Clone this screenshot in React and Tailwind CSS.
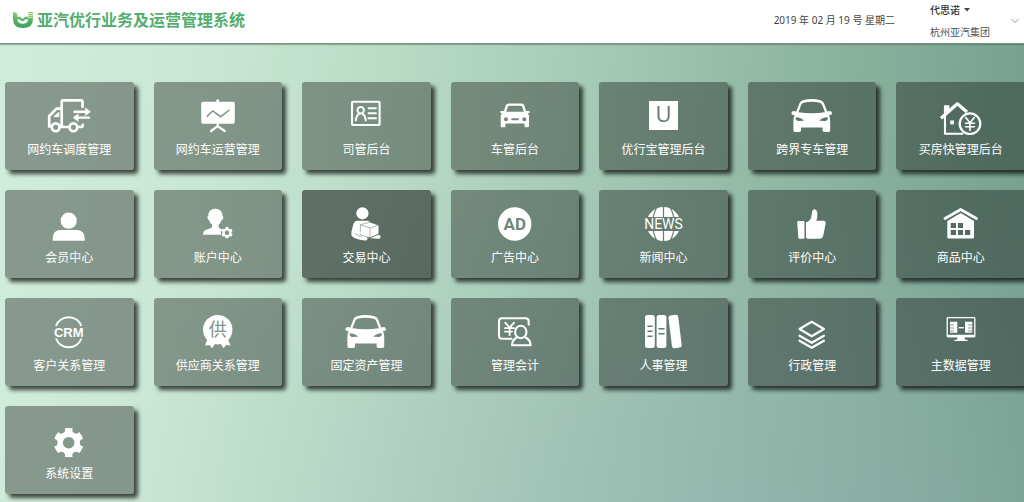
import React from 'react';

function Gear({ id, cx, cy, r, notch, hole }) {
  const angles = [0, 60, 120, 180, 240, 300];
  return (
    <>
      <mask id={id}>
        <circle cx={cx} cy={cy} r={r} fill="white" />
        <circle cx={cx} cy={cy} r={hole} fill="black" />
        {angles.map((a) => (
          <circle key={a} cx={cx + r} cy={cy} r={notch} fill="black" transform={`rotate(${a} ${cx} ${cy})`} />
        ))}
      </mask>
      <rect x={cx - r} y={cy - r} width={r * 2} height={r * 2} fill="currentColor" mask={`url(#${id})`} />
    </>
  );
}

const line = { fill: 'none', stroke: 'currentColor', strokeLinecap: 'round', strokeLinejoin: 'round' };

const truck = (
  <g {...line} strokeWidth="2.7">
    <path d="M16.7 32.5V7.5q0-1.2 1.2-1.2h18.4q1.2 0 1.2 1.2v5.2" />
    <path d="M16.7 14.6h-5.2L4.2 22v10.5h1.4M16.7 33h6.5M33.6 33h2.6q1.6 0 1.6-2.2" />
    <path d="M13.5 18.5l-4.7 4.2h4.7z" fill="currentColor" strokeWidth="1" />
    <circle cx="10.7" cy="33.2" r="3.9" />
    <circle cx="28.4" cy="33.2" r="3.9" />
    <path d="M29.5 17.7H42M44 23.6H31" strokeWidth="2.4" />
    <path d="M40.5 14l5 3.7-5 3.7zM33 20l-5 3.6 5 3.7z" fill="currentColor" strokeWidth=".5" />
  </g>
);

const board = (
  <g>
    <path d="M9 7.7h13.3V6.4q0-1.2 1.4-1.2t1.4 1.2v1.3H39q1.8 0 1.8 1.8v18.4q0 1.8-1.8 1.8H9q-1.8 0-1.8-1.8V9.5q0-1.8 1.8-1.8z" fill="currentColor" />
    <path d="M12.7 22.7l6-5.7 8 5.7 8.6-6.7" fill="none" stroke="#7f9387" strokeWidth="1.5" />
    <path d="M23.7 29.5v3M17 37l6.7-4.8 6.9 4.8" {...line} strokeWidth="2.2" />
  </g>
);

const idCard = (
  <g {...line}>
    <rect x="10" y="7.8" width="27.6" height="23.2" rx="1" strokeWidth="2.1" />
    <circle cx="18.7" cy="16.3" r="3.2" strokeWidth="2" />
    <path d="M13.8 26.3q.5-4.500 3.2-6.500M23.8 26.3q-.5-4.500-3.2-6.500" strokeWidth="2" />
    <path d="M26.5 14.3h7.5M26.5 19.3h7.5M26.5 24.3h7.5" strokeWidth="1.9" />
  </g>
);

const smallCar = (
  <path
    fillRule="evenodd"
    fill="currentColor"
    d="M18 9.600h12.200q2.600 0 3.200 2.200l1.500 5.200h2.600q1.300 0 1.300 1t-1.300 1l-.8.300q1.300 1.200 1.300 3v10q0 1-1 1h-2.500q-1 0-1-1v-2.700H14.400v2.700q0 1-1 1h-2.700q-1 0-1-1v-10q0-1.800 1.300-3l-.8-.3q-1.200 0-1.200-1t1.200-1H13l1.600-5.200q.8-2.200 3.400-2.200zM18.500 11.700q-1.400 0-1.800 1.300l-1.400 4.700h17.500L31.400 13q-.4-1.300-1.800-1.300zM13 25.300a2 2 0 1 0 4 0a2 2 0 1 0-4 0M31.300 25.300a2 2 0 1 0 4 0a2 2 0 1 0-4 0M21.200 24.200q-1 0-1 1t1 1h5.800q1 0 1-1t-1-1z"
  />
);

const bigCar = (
  <path
    fillRule="evenodd"
    fill="currentColor"
    d="M15 6.200q8.700-2.300 17.400 0 2.600.6 3.600 3l3.200 8.200 2.800-.3q2 .2 2 2.300 0 1.400-1.800 1.600h-1.300q1.300 2.300 1.300 5.200v10q0 1.800-1.600 1.800h-4.400q-1.600 0-1.600-1.800v-2.700H13v2.700q0 1.800-1.600 1.800H7q-1.600 0-1.600-1.800v-10q0-2.900 1.300-5.200H5.300q-1.900-.2-1.900-1.600 0-2.100 2.100-2.300l2.800.3 3.200-8.200q1-2.400 3.500-3zM15.600 8.800q-1.700.4-2.300 2l-2.900 7.400q13.300 2 26.600 0l-2.900-7.400q-.6-1.600-2.300-2-8.100-2-16.200 0zM7.600 23.300q-.2 3.400 2.400 3.600l6-.1q-2.500-3.200-8.400-3.500zM39.800 23.300q-5.900.3-8.400 3.500l6 .1q2.600-.2 2.400-3.600z"
  />
);

const letterU = (
  <g>
    <rect x="9" y="7" width="29" height="29" fill="currentColor" />
    <text x="23.5" y="27.5" textAnchor="middle" fontSize="22" fill="#657c70" className="font-['Open_Sans',sans-serif]">U</text>
  </g>
);

const houseCoin = (
  <g {...line} strokeWidth="2.1">
    <path d="M4 24.2L20.3 9.8 30 18" strokeWidth="3.2" strokeLinecap="butt" />
    <path d="M7.9 19V12.3h3.5v3.5" fill="currentColor" strokeWidth="2" />
    <path d="M8 23v16.8h17.5" />
    <rect x="13.2" y="26.5" width="3.8" height="3.8" fill="currentColor" stroke="none" />
    <circle cx="33" cy="29.7" r="10.3" strokeWidth="2.2" />
    <path d="M28.7 23.5l4.3 5.2 4.3-5.2M33 28.7v7.8M28.6 29.3h8.8M28.6 32.8h8.8" strokeWidth="1.6" />
  </g>
);

const member = (
  <g fill="currentColor">
    <circle cx="23.7" cy="18.7" r="8.1" />
    <path d="M7.7 38.7v-2q0-8.700 8-8.700h16q8 0 8 8.700v2z" />
  </g>
);

const account = (
  <g>
    <path
      fill="currentColor"
      d="M21.3 6.7q4.2 0 6.2 3 1 1.800.9 4.400 1.500.5.7 2.400-.5 1.500-1.400 1.500-.8 2.800-3 4.500v3.200q1.300 1 3.600 1.500v1.500l-1.600.4.500 2-.6 1.600H9q-.2-4 3.300-5 4.500-1.200 5.700-2.200v-3q-2.200-1.700-3-4.500-.9 0-1.400-1.500-.8-1.900.7-2.400-.1-2.600.9-4.400 2-3 6.100-3z"
    />
    <Gear id="account-gear" cx={33} cy={30.7} r={5.8} notch={1.4} hole={2.3} />
  </g>
);

const trade = (
  <g>
    <circle cx="20.4" cy="11.3" r="6.1" fill="currentColor" />
    <path fill="currentColor" d="M15.5 18.7h10q2.500 0 2.800 2.500L18.500 24v8l6.500 3.300q1.700 3-1.700 3.200-9.500-.8-13-4-1.400-1.500-.8-5l1.800-7q.9-3.500 4.200-3.800z" />
    <path d="M18.3 22.8l9.700-2.600 8.800 3v8.500l-8.800 4-9.700-3z" fill="currentColor" stroke="#5f7066" strokeWidth=".5" />
    <path d="M18.3 22.8l9.700 3.200 8.800-2.800M28 26v9.500M12.7 31.5l7 3.300" fill="none" stroke="#5f7066" strokeWidth=".5" />
    <path fill="currentColor" d="M28.5 36.3l6.500-3q3.300-.8 3.500 1.200.2 2-1.300 2.200z" />
    <path d="M16 31q3-1.500 6 1l3 1.500" {...line} strokeWidth="2" />
  </g>
);

const ad = (
  <g>
    <circle cx="23.7" cy="22" r="16.7" fill="currentColor" />
    <text x="23.7" y="28" textAnchor="middle" fontSize="17" fill="#6f867b" className="font-['Roboto',sans-serif] font-bold">AD</text>
  </g>
);

const news = (
  <g>
    <mask id="news-globe">
      <circle cx="23.5" cy="22" r="17" fill="white" />
      <path d="M0 15h48v14H0z" fill="black" />
      <path d="M23.5 4v36M17.5 4q-10 18 0 36M29.5 4q10 18 0 36" fill="none" stroke="black" strokeWidth="1.2" />
    </mask>
    <rect x="6" y="4" width="36" height="36" fill="currentColor" mask="url(#news-globe)" />
    <text x="23.5" y="27" textAnchor="middle" fontSize="14" fill="currentColor" className="font-['Roboto',sans-serif]">NEWS</text>
  </g>
);

const thumb = (
  <g fill="currentColor">
    <path d="M10.2 19h5.3q1 0 1 1v15.700q0 1-1 1h-4.200q-1 0-1-1L9.200 20q0-1 1-1z" />
    <path d="M18 20.5q4.600-2 5.300-5.500l.9-5.700q.5-2 2.300-2 2.500.4 2.900 4.200.2 3.200-1 7.300h7.500q2 .3 1.800 2.400l-2.500 12.500q-.8 3-3.500 3H21q-3 0-3-2z" />
  </g>
);

const houseGrid = (
  <g>
    <path d="M8 16.5l15.7-9 15.7 9" {...line} strokeWidth="2.8" />
    <path
      fill="currentColor"
      fillRule="evenodd"
      d="M10.3 19l13.4-8L37 19v16q0 1.500-1.500 1.500H11.800q-1.500 0-1.500-1.500zM13.700 21v5H19v-5zM20.900 21v5h5.200v-5zM13.700 28v5H19v-5zM20.900 28v5h5.200v-5zM28 28v5h5.200v-5z"
    />
  </g>
);

const crm = (
  <g>
    <path d="M11 16a13.6 13.6 0 0 1 25.4 0M11 28.5a13.6 13.6 0 0 0 25.4 0" {...line} strokeWidth="2" strokeLinecap="butt" />
    <text x="23.7" y="26.7" textAnchor="middle" fontSize="13" fill="currentColor" className="font-['Liberation_Sans',sans-serif] font-bold">CRM</text>
  </g>
);

const supplier = (
  <g>
    <path d="M14 28l-3 7.500 4.500-.5 2.500 3.200 3.500-5h4.700l3.500 5L32 35l4.500.5-3-7.500z" fill="currentColor" />
    <circle cx="23.7" cy="19.7" r="14.7" fill="currentColor" />
    <text x="23.7" y="26" textAnchor="middle" fontSize="18" fill="#7f9387" className="font-['Noto_Sans_CJK_SC',sans-serif]">供</text>
  </g>
);

const accounting = (
  <g {...line} strokeWidth="2.1">
    <path d="M20.5 28.8H11q-3 0-3-3V11.200q0-3 3-3h23.700q3 0 3 3v3.500" />
    <path d="M14.2 12.7l4.400 5 4.400-5M18.600 17.700v7.500M14 18.200h9M14 21.600h7" strokeWidth="1.8" />
    <ellipse cx="29.8" cy="22" rx="5.7" ry="6.2" />
    <path d="M25.8 27.5q-4.600 2.200-4.800 7.700h18.600q-.2-5.500-5-7.700" />
  </g>
);

const books = (
  <g>
    <rect x="5" y="5" width="9.8" height="33" rx="2.5" fill="currentColor" />
    <rect x="16.6" y="5" width="9.8" height="33" rx="2.5" fill="currentColor" />
    <rect x="30.2" y="5" width="9.8" height="33" rx="2.5" fill="currentColor" transform="rotate(-7 35.1 21.5)" />
    <path d="M8 16.3h4M8 21.3h4M8 26.3h4M19 18.8h5M19 23.8h5" stroke="#657c70" strokeWidth="1.6" strokeLinecap="round" />
  </g>
);

const layers = (
  <g {...line} strokeWidth="2.2">
    <path d="M23.7 11.8l12.2 7.2-12.2 7.2L11.5 19z" />
    <path d="M11.5 25.7l12.2 7.1 12.2-7.1M11.5 30.7l12.2 7.1 12.2-7.1" />
  </g>
);

const monitor = (
  <g>
    <rect x="10.2" y="7.7" width="27.6" height="19" rx=".8" fill="none" stroke="currentColor" strokeWidth="1.3" />
    <path d="M10 24.8h28v2.500H10zM20.500 27h7l.6 2.700h2.400V31H17.400v-1.300H20z" fill="currentColor" />
    <path d="M13 11.7h7.300v11H13zM28 11.7h7.300v11H28z" fill="currentColor" />
    <path d="M13 15h4M13 18h4M13 21h4M31.300 15h4M31.300 18h4M31.300 21h4" stroke="#576e63" strokeWidth=".7" />
    <path d="M21.8 17.7h5" stroke="currentColor" strokeWidth="1.4" />
  </g>
);

const settings = <Gear id="settings-gear" cx={23.7} cy={24.7} r={14.7} notch={3.6} hole={5.8} />;

const modules = [
  ['网约车调度管理', truck],
  ['网约车运营管理', board],
  ['司管后台', idCard],
  ['车管后台', smallCar],
  ['优行宝管理后台', letterU],
  ['跨界专车管理', bigCar],
  ['买房快管理后台', houseCoin],
  ['会员中心', member],
  ['账户中心', account],
  ['交易中心', trade, true],
  ['广告中心', ad],
  ['新闻中心', news],
  ['评价中心', thumb],
  ['商品中心', houseGrid],
  ['客户关系管理', crm],
  ['供应商关系管理', supplier],
  ['固定资产管理', bigCar],
  ['管理会计', accounting],
  ['人事管理', books],
  ['行政管理', layers],
  ['主数据管理', monitor],
  ['系统设置', settings],
];

function Tile({ label, icon, active }) {
  return (
    <a
      href="#"
      className={`flex flex-col items-center rounded-[3px] pt-3 pb-2 text-white shadow-[4px_4px_4px_rgba(0,0,0,0.7)] ${active ? 'bg-black/50' : 'bg-black/35'}`}
    >
      <svg viewBox="0 0 48 44" className="h-11 w-12" aria-hidden="true">{icon}</svg>
      <span className="text-[12px] leading-6 whitespace-nowrap">{label}</span>
    </a>
  );
}

function Logo() {
  return (
    <svg viewBox="0 0 20 16" className="h-4 w-5" aria-hidden="true">
      <defs>
        <linearGradient id="logo-green" x1="0" y1="0" x2="0" y2="1">
          <stop offset="0" stopColor="#98d068" />
          <stop offset=".5" stopColor="#55b263" />
          <stop offset="1" stopColor="#3da160" />
        </linearGradient>
      </defs>
      <path d="M0 0q4 0 4.300 3v2.200Q6.500 3.700 8.300 6q1.300 1.600 2.500 0 2-2.500 4.500-.8V0H20v7q0 9-10 9T0 7z" fill="url(#logo-green)" />
      <path d="M4.300 7.500q.7 4.300 5.500 4.300 4.600 0 5.500-4.300-2.500-1-4 .8-1.700 1.700-3.400 0-1.600-1.800-3.600-.8z" fill="#fff" />
      <path d="M15 1.700h5M15 3.700h5M15 5.700h5" stroke="#fff" strokeWidth=".7" />
    </svg>
  );
}

export default function App() {
  return (
    <div className="flex min-h-screen flex-col overflow-x-hidden font-['Noto_Sans','Noto_Sans_CJK_SC',sans-serif]">
      <header className="relative flex h-11 items-center justify-between border-b border-[#7d9585] bg-white pr-1 pl-[13px] shadow-[0_1px_1px_rgba(60,90,70,0.4)]">
        <div className="flex items-center gap-1 pb-1">
          <Logo />
          <h1 className="text-[16px] leading-5 font-bold text-[#55ae6e]">亚汽优行业务及运营管理系统</h1>
        </div>
        <div className="flex items-center pb-0.5 text-[10px] text-[#444]">
          <time dateTime="2019-02-19" className="mr-[35px]">2019 年 02 月 19 号 星期二</time>
          <div className="flex w-20 flex-col gap-1">
            <button type="button" className="flex items-center gap-1 text-left leading-[18px] font-medium text-[#333]">
              代思诺
              <svg viewBox="0 0 6 4" className="h-1 w-1.5" aria-hidden="true"><path d="M0 0h6L3 3.500z" fill="#444" /></svg>
            </button>
            <span className="leading-[18px] text-[#555]">杭州亚汽集团</span>
          </div>
          <button type="button" aria-label="展开" className="p-px">
            <svg viewBox="0 0 8 6" className="h-1.5 w-2" aria-hidden="true"><path d="M.5 1L4 4.500 7.500 1" fill="none" stroke="#888" strokeWidth=".9" /></svg>
          </button>
        </div>
      </header>
      <main className="flex-1 bg-[radial-gradient(ellipse_65%_90%_at_72%_110%,rgba(150,178,184,0.45)_0%,rgba(150,178,184,0)_100%),linear-gradient(93deg,#d0ecdb_0%,#cbe8d6_16%,#bddfca_33%,#a8ccb8_54%,#8fb6a2_76%,#769f8e_100%)] pt-[38px] pb-2 pl-[5px]">
        <nav aria-label="功能模块" className="-mr-px grid grid-cols-7 gap-5">
          {modules.map(([label, icon, active]) => (
            <Tile key={label} label={label} icon={icon} active={active} />
          ))}
        </nav>
      </main>
    </div>
  );
}
